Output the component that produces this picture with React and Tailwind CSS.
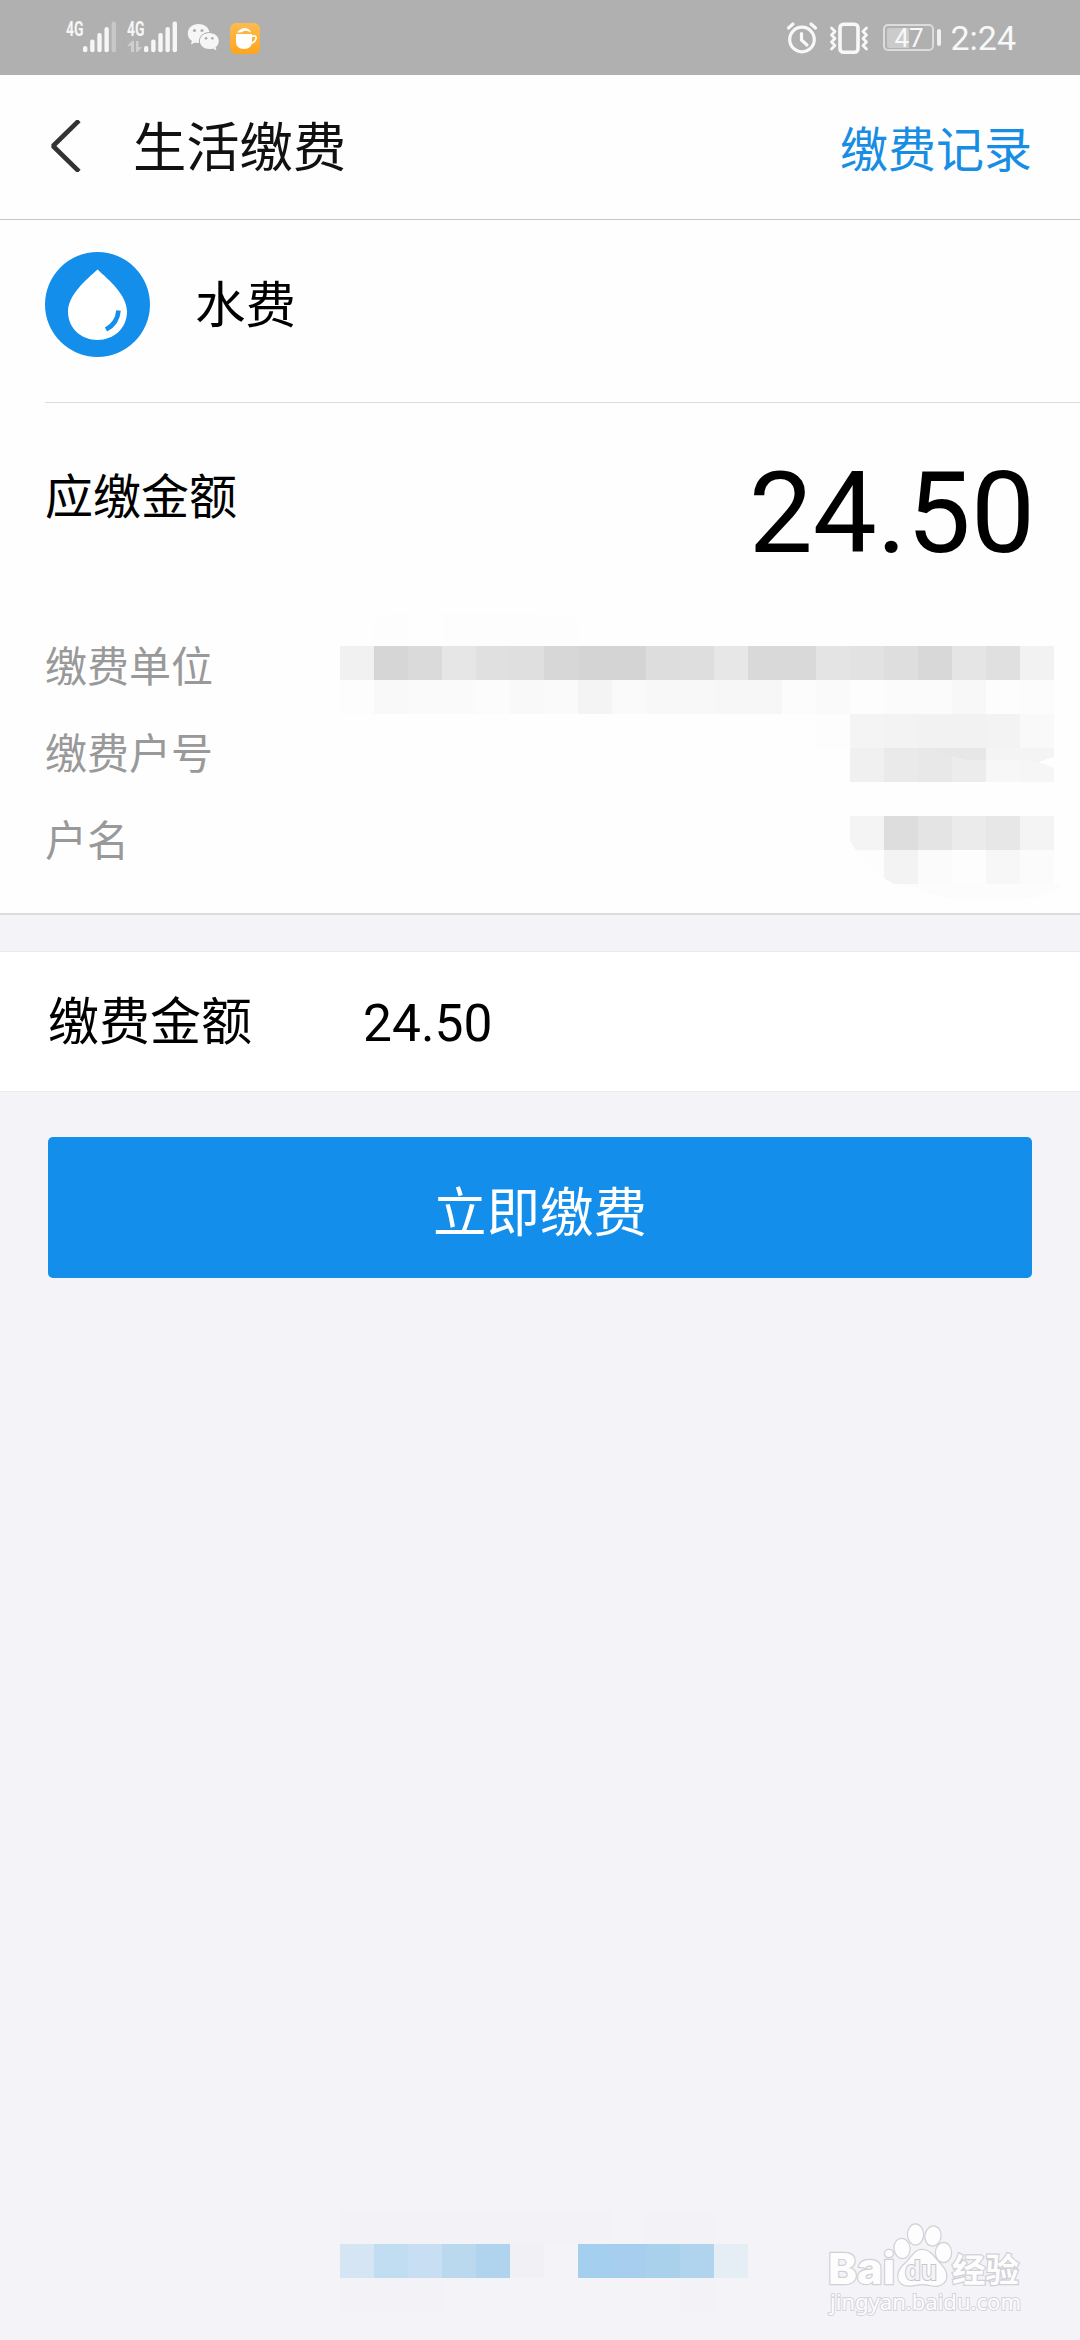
import React from "react";

const CELL = 34;

/* Pixelated redaction: one colour for each 34px cell of a row */
const unitRow = [
  "#f1f1f1", "#d6d6d6", "#dadada", "#e6e6e6", "#e0e0e0", "#dfdfdf", "#d7d7d7",
  "#d4d4d4", "#d4d4d4", "#dddddd", "#dedede", "#e7e7e7", "#d9d9d9", "#d9d9d9",
  "#e4e4e4", "#e2e2e2", "#dedede", "#d8d8d8", "#e5e5e5", "#e0e0e0", "#f2f2f2",
];
const unitFade = [
  "#fdfdfd", "#f9f9f9", "#fafafa", "#fafafa", "#fcfcfc", "#f9f9f9", "#fafafa",
  "#f4f4f4", "#fafafa", "#f8f8f8", "#f8f8f8", "#f7f7f7", "#f7f7f7", "#fcfcfc",
  "#fafafa", "#fdfdfd", "#fbfbfb", "#fbfbfb", "#f8f8f8", "#fdfdfd", "#fcfcfc",
];
const accountTop = ["#fdfdfd", "#f4f4f4", "#f3f3f3", "#f2f2f2", "#f2f2f2", "#f3f3f3", "#f9f9f9"];
const accountBottom = ["#f0f0f0", "#eaeaea", "#e8e8e8", "#ececec", "#f7f7f7", "#f6f6f6"];
const nameTop = ["#f4f4f4", "#dddddd", "#e4e4e4", "#ebebeb", "#e7e7e7", "#f4f4f4"];
const nameBottom = ["#fdfdfd", "#f3f3f3", "#fbfbfb", "#fdfdfd", "#f7f7f7", "#fbfbfb"];

function Cells({ colors, col, y }) {
  return colors.map((c, i) => (
    <rect key={i} x={(col + i) * CELL} y={y} width={CELL} height={CELL} fill={c} />
  ));
}

function DetailMosaic() {
  return (
    <svg className="absolute left-[340px] top-[211px]" width="728" height="290" shapeRendering="crispEdges">
      <path d="M34 4 Q50 0 68 0 V33 H34Z M102 0 H160 Q230 2 238 6 V33 H102Z" fill="#fdfdfd" />
      <Cells colors={unitRow} col={0} y={33} />
      <Cells colors={unitFade} col={0} y={67} />
      <Cells colors={accountTop} col={14} y={101} />
      <Cells colors={accountBottom} col={15} y={135} />
      <path d="M600 135 H646 V147 H627 Q618 146 600 139Z" fill="#e7e7e7" />
      <path d="M646 135 H714 V144 L698 149 L680 147 H646Z" fill="#f4f4f4" />
      <path d="M698 149 L714 144 V155 Q706 151 698 149Z" fill="#fefefe" />
      <Cells colors={nameTop} col={15} y={203} />
      <Cells colors={nameBottom} col={15} y={237} />
      <path d="M510 227 Q523 255 554 271 H510Z" fill="#fefefe" />
      <path d="M554 271 H724 Q703 286 680 286 H612 Q596 284 575 275Z" fill="#fcfcfc" />
    </svg>
  );
}

function FooterMosaic() {
  const main = [
    "#d6e5f3", "#c1ddf1", "#c8def2", "#bbd9ee", "#b0d4ee", "#f1f0f5", "#f4f3f8",
    "#a4cfee", "#a8ceef", "#aad1ec", "#b0d4ee", "#e5edf5",
  ];
  return (
    <svg width="408" height="102" shapeRendering="crispEdges">
      <rect x="0" y="0" width="272" height="34" fill="#f3f2f7" />
      <rect x="306" y="0" width="68" height="34" fill="#f3f2f7" />
      <Cells colors={main} col={0} y={34} />
      <rect x="0" y="68" width="102" height="34" fill="#f3f2f7" />
      <rect x="340" y="68" width="34" height="34" fill="#f3f2f7" />
    </svg>
  );
}

function Signal({ data, weakLast }) {
  const tops = [46, 39.5, 33, 27, 21.5];
  return (
    <svg width="50" height="75" fill="#f6f6f6">
      <text x="0" y="35.500" fontSize="20" fontWeight="700" fontFamily="Roboto, sans-serif" textLength="17.5" lengthAdjust="spacingAndGlyphs">4G</text>
      {data && (
        <path d="M0 46 L5 41 H7 V52 H4 V46Z M9 41 H11.500 V47 H15 L10.500 52 H9Z" fill="#cfcfcf" />
      )}
      {tops.map((t, i) => (
        <rect key={t} x={17 + i * 7.15} y={t} width="4.400" height={52.3 - t} rx="2.100" fill={weakLast && i === 4 ? "#c8c8c8" : "#f6f6f6"} />
      ))}
    </svg>
  );
}

function WeChat() {
  return (
    <svg width="33" height="30" viewBox="0 0 33 30" fill="#f6f6f6">
      <path d="M11.500 1 C5.300 1 .8 5 .8 10.400 C.8 13.500 2.300 16 4.800 17.800 L4 21.500 L8.200 19.500 Q10 20.200 12 20.100 C11 14 16 8.800 22.500 9 C21.500 4 17 1 11.500 1Z" />
      <path d="M22.300 10 C16.800 10 12.900 13.600 12.900 18 C12.900 22.600 17 26 22.300 26 Q24.300 26 26 25.400 L29.400 27.400 L28.600 24.200 C30.700 22.600 31.800 20.500 31.800 18 C31.800 13.600 27.700 10 22.300 10Z" />
      <g fill="#b0b0b0">
        <circle cx="7.500" cy="7.500" r="1.600" /><circle cx="15" cy="7.500" r="1.600" />
        <circle cx="19" cy="15.300" r="1.400" /><circle cx="25.300" cy="15.300" r="1.400" />
      </g>
    </svg>
  );
}

function CupApp() {
  return (
    <svg width="30" height="31" viewBox="0 0 30 31">
      <defs>
        <linearGradient id="cup" x1="0" y1="0" x2="0" y2="1">
          <stop offset="0" stopColor="#fdbb50" /><stop offset="1" stopColor="#fda51e" />
        </linearGradient>
      </defs>
      <rect width="30" height="31" rx="6" fill="url(#cup)" />
      <path d="M6 11 H22 V18 Q22 26 14 26 Q6 26 6 18Z" fill="#fff" />
      <path d="M21.500 13.500 Q26.500 11.500 26 15.500 Q25.500 19 20.500 20.500" fill="none" stroke="#fff" strokeWidth="1.800" />
      <path d="M7 9.500 Q11 5 14.500 5 Q19.500 5 21 9.500 Q17 7 14 8 Q11 10 7 9.500Z" fill="#fff" />
    </svg>
  );
}

function Alarm() {
  return (
    <svg width="32" height="34" viewBox="0 0 32 34" fill="none" stroke="#f8f8f8" strokeLinecap="round" strokeLinejoin="round">
      <circle cx="16" cy="18.500" r="12.300" strokeWidth="3.200" />
      <path d="M15.500 12.500 V19 L21 24" strokeWidth="3.200" />
      <path d="M2.500 7 L7 3 M25 3 L29.500 7" strokeWidth="3.200" />
    </svg>
  );
}

function Vibrate() {
  return (
    <svg width="42" height="34" viewBox="0 0 42 34" fill="none" stroke="#f8f8f8" strokeLinejoin="round" strokeLinecap="round">
      <rect x="12" y="3.300" width="18" height="28" rx="3.500" strokeWidth="3.600" />
      <path d="M3.500 7 L7 10.500 L3.500 14 L7 17.500 L3.500 21 L7 24.500 L3.500 28" strokeWidth="2.800" />
      <path d="M38.500 7 L35 10.500 L38.500 14 L35 17.500 L38.500 21 L35 24.500 L38.500 28" strokeWidth="2.800" />
    </svg>
  );
}

function StatusBar() {
  return (
    <div className="flex h-[75px] shrink-0 items-center justify-between bg-[#b0b0b0] pl-[66px] pr-[64px] font-[Roboto,sans-serif]">
      <div className="flex items-center">
        <Signal weakLast />
        <div className="ml-[11px] flex"><Signal data /></div>
        <div className="ml-[10px]"><WeChat /></div>
        <div className="ml-[10px] pt-[1px]"><CupApp /></div>
      </div>
      <div className="flex items-center text-[#f8f8f8]">
        <Alarm />
        <div className="ml-[10px]"><Vibrate /></div>
        <div className="ml-[13px] flex h-[27px] w-[51px] items-center rounded-[5px] border-2 border-[#dcdcdc] p-[2px]">
          <div className="h-[20px] w-[22px] rounded-l-[2px] bg-[#cbcbcb]" />
          <div className="-ml-[15px] text-[26px] leading-[20px]">47</div>
        </div>
        <div className="ml-[3px] h-[17px] w-[4px] rounded-[2px] bg-[#f0f0f0]" />
        <div className="ml-[9px] text-[34px] leading-[40px]">2:24</div>
      </div>
    </div>
  );
}

function Watermark() {
  return (
    <svg className="absolute left-[820px] top-[2215px]" width="220" height="110" fill="#fdfdfd" stroke="#d0d0d5" strokeWidth="2.400" style={{ paintOrder: "stroke" }}>
      <text x="8" y="69" fontSize="43" fontWeight="800" fontFamily="Inter, Liberation Sans, sans-serif" textLength="67" lengthAdjust="spacingAndGlyphs">Bai</text>
      <ellipse cx="82" cy="33.500" rx="7.500" ry="9.500" transform="rotate(-8 82 33.500)" />
      <ellipse cx="95.500" cy="19.500" rx="7.500" ry="10" />
      <ellipse cx="113" cy="21" rx="7.500" ry="9.500" transform="rotate(10 113 21)" />
      <ellipse cx="123.500" cy="37.500" rx="7.500" ry="9.500" />
      <path d="M102 35 C94 35 92 43 84 50 C76 57 76 70 88 70.500 C94 71 97 69 102 69 C108 69 112 71.500 118 70.500 C129 68 128 57 121 50 C114 43 111 35 102 35Z" />
      <text x="85" y="64.500" fontSize="27" fontWeight="700" fontFamily="Liberation Sans, sans-serif" textLength="32" lengthAdjust="spacingAndGlyphs" fill="#f4f4f8" stroke="#c6c6cc" strokeWidth="2">du</text>
      <text x="132" y="67" fontSize="33" fontWeight="700" fontFamily="Noto Sans CJK SC, sans-serif" textLength="67" lengthAdjust="spacingAndGlyphs">经验</text>
      <text x="10" y="95" fontSize="22" fontFamily="Noto Sans, sans-serif" textLength="191" lengthAdjust="spacingAndGlyphs" stroke="#d4d4da" strokeWidth="2">jingyan.baidu.com</text>
    </svg>
  );
}

export default function App() {
  return (
    <div className="relative flex h-[2340px] w-[1080px] flex-col overflow-hidden bg-[#f4f3f8] font-['Noto_Sans_CJK_SC',sans-serif] text-black">
      <StatusBar />

      <header className="flex h-[145px] shrink-0 items-center border-b border-[#c6c6c6] bg-[#fefefe] pb-[2px] pl-[49px] pr-[48px]">
        <svg width="32" height="52" viewBox="0 0 32 52" fill="none" stroke="#333" strokeWidth="4.600">
          <path d="M30 .5 L4 26 L30 51.500" strokeLinejoin="bevel" />
        </svg>
        <h1 className="-mt-[4px] ml-[52px] text-[53.300px] leading-[60px] text-[#111]">生活缴费</h1>
        <a className="-mt-[1px] ml-auto text-[48px] leading-[56px] text-[#188de4]">缴费记录</a>
      </header>

      <section className="relative flex h-[695px] shrink-0 flex-col border-b-2 border-[#dcdcdd] bg-[#fefefe]">
        <div className="ml-[45px] flex h-[183px] shrink-0 items-center border-b border-[#dcdcdc] pb-[13px]">
          <svg width="105" height="105" viewBox="0 0 105 105">
            <circle cx="52.500" cy="52.500" r="52.500" fill="#138eea" />
            <path d="M52.500 17.500 C64 28 82 43 82 59.500 C82 76 69 88 52.500 88 C36 88 23 76 23 59.500 C23 43 41 28 52.500 17.500Z" fill="#fff" />
            <path d="M73.500 58.500 Q72.500 71.500 61 77.500" fill="none" stroke="#138eea" strokeWidth="4.600" />
          </svg>
          <span className="-mt-[8px] ml-[45px] text-[50.500px] leading-[60px]">水费</span>
        </div>
        <div className="flex h-[217px] shrink-0 items-start justify-between pl-[45px] pr-[45px]">
          <span className="mt-[60px] text-[48px] leading-[60px]">应缴金额</span>
          <span className="mt-[50px] font-[Roboto,sans-serif] text-[114px] leading-[120px]">24.50</span>
        </div>
        <div className="flex flex-col pl-[45px] text-[42px] leading-[87px] text-[#999]">
          <span>缴费单位</span>
          <span>缴费户号</span>
          <span>户名</span>
        </div>
        <div className="absolute inset-x-0 top-[182px]">
          <DetailMosaic />
        </div>
      </section>

      <section className="mt-[36px] flex h-[141px] shrink-0 items-center border-y border-[#ebebee] bg-white pl-[48px]">
        <span className="-mt-[8px] w-[315px] text-[51px] leading-[60px]">缴费金额</span>
        <span className="mt-[5px] font-[Roboto,sans-serif] text-[51.500px] leading-[60px]">24.50</span>
      </section>

      <button className="mx-[48px] mt-[45px] flex h-[141px] shrink-0 items-center justify-center rounded-[5px] bg-[#138eea] pt-[2px] text-[53.500px] leading-[60px] text-white">
        立即缴费
      </button>

      <footer className="mt-auto flex pb-[28px] pl-[340px]">
        <FooterMosaic />
      </footer>
      <Watermark />
    </div>
  );
}
